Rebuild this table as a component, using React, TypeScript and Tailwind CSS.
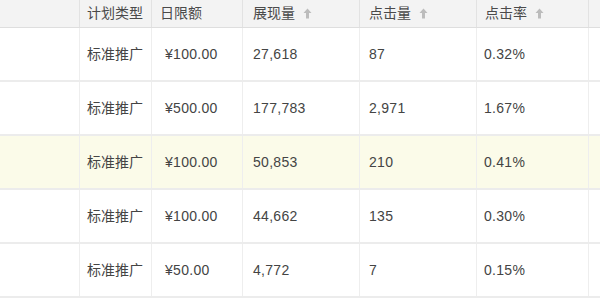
const rows = [
  { type: "标准推广", budget: "¥100.00", views: "27,618", clicks: "87", ctr: "0.32%" },
  { type: "标准推广", budget: "¥500.00", views: "177,783", clicks: "2,971", ctr: "1.67%" },
  { type: "标准推广", budget: "¥100.00", views: "50,853", clicks: "210", ctr: "0.41%", hl: true },
  { type: "标准推广", budget: "¥100.00", views: "44,662", clicks: "135", ctr: "0.30%" },
  { type: "标准推广", budget: "¥50.00", views: "4,772", clicks: "7", ctr: "0.15%" },
];

const cols = "grid grid-cols-[80px_72px_91px_117px_117px_112px_1fr]";

const SortArrow = () => (
  <svg width="9" height="11" viewBox="0 0 9 11" className="ml-[8px] inline-block">
    <path d="M4.5 0.5 L8.5 5 H6 V10.5 H3 V5 H0.5 Z" fill="#bcbcbc" />
  </svg>
);

export default function App() {
  return (
    <div
      className="w-[600px] h-[302px] overflow-hidden bg-white text-[14px] text-[#444]"
      style={{ fontFamily: '"Liberation Sans", "Noto Sans CJK SC", sans-serif' }}
    >
      {/* header */}
      <div className={`${cols} h-[28px] bg-[#f3f3f3] border-b border-[#dedede] text-[#4a4a4a]`}>
        <div className="border-r border-[#e2e2e2]" />
        <div className="flex items-center pl-[7px] border-r border-[#e2e2e2]">计划类型</div>
        <div className="flex items-center pl-[8px] border-r border-[#e2e2e2]">日限额</div>
        <div className="flex items-center pl-[10px] border-r border-[#e2e2e2]">
          展现量<SortArrow />
        </div>
        <div className="flex items-center pl-[9px] border-r border-[#e2e2e2]">
          点击量<SortArrow />
        </div>
        <div className="flex items-center pl-[8px] border-r border-[#e2e2e2]">
          点击率<SortArrow />
        </div>
        <div />
      </div>

      {rows.map((r, i) => (
        <div
          key={i}
          className={`${cols} h-[54px] border-b-2 border-[#ececec] ${r.hl ? "bg-[#fbfbe9]" : "bg-white"}`}
        >
          <div className="border-r border-[#eeeeee]" />
          <div className="flex items-center pl-[7px] border-r border-[#eeeeee]">{r.type}</div>
          <div className="flex items-center pl-[13px] border-r border-[#eeeeee] tracking-[0.3px]">{r.budget}</div>
          <div className="flex items-center pl-[10px] border-r border-[#eeeeee] tracking-[0.3px]">{r.views}</div>
          <div className="flex items-center pl-[9px] border-r border-[#eeeeee] tracking-[0.3px]">{r.clicks}</div>
          <div className="flex items-center pl-[7px] border-r border-[#eeeeee] tracking-[0.3px]">{r.ctr}</div>
          <div />
        </div>
      ))}
    </div>
  );
}
